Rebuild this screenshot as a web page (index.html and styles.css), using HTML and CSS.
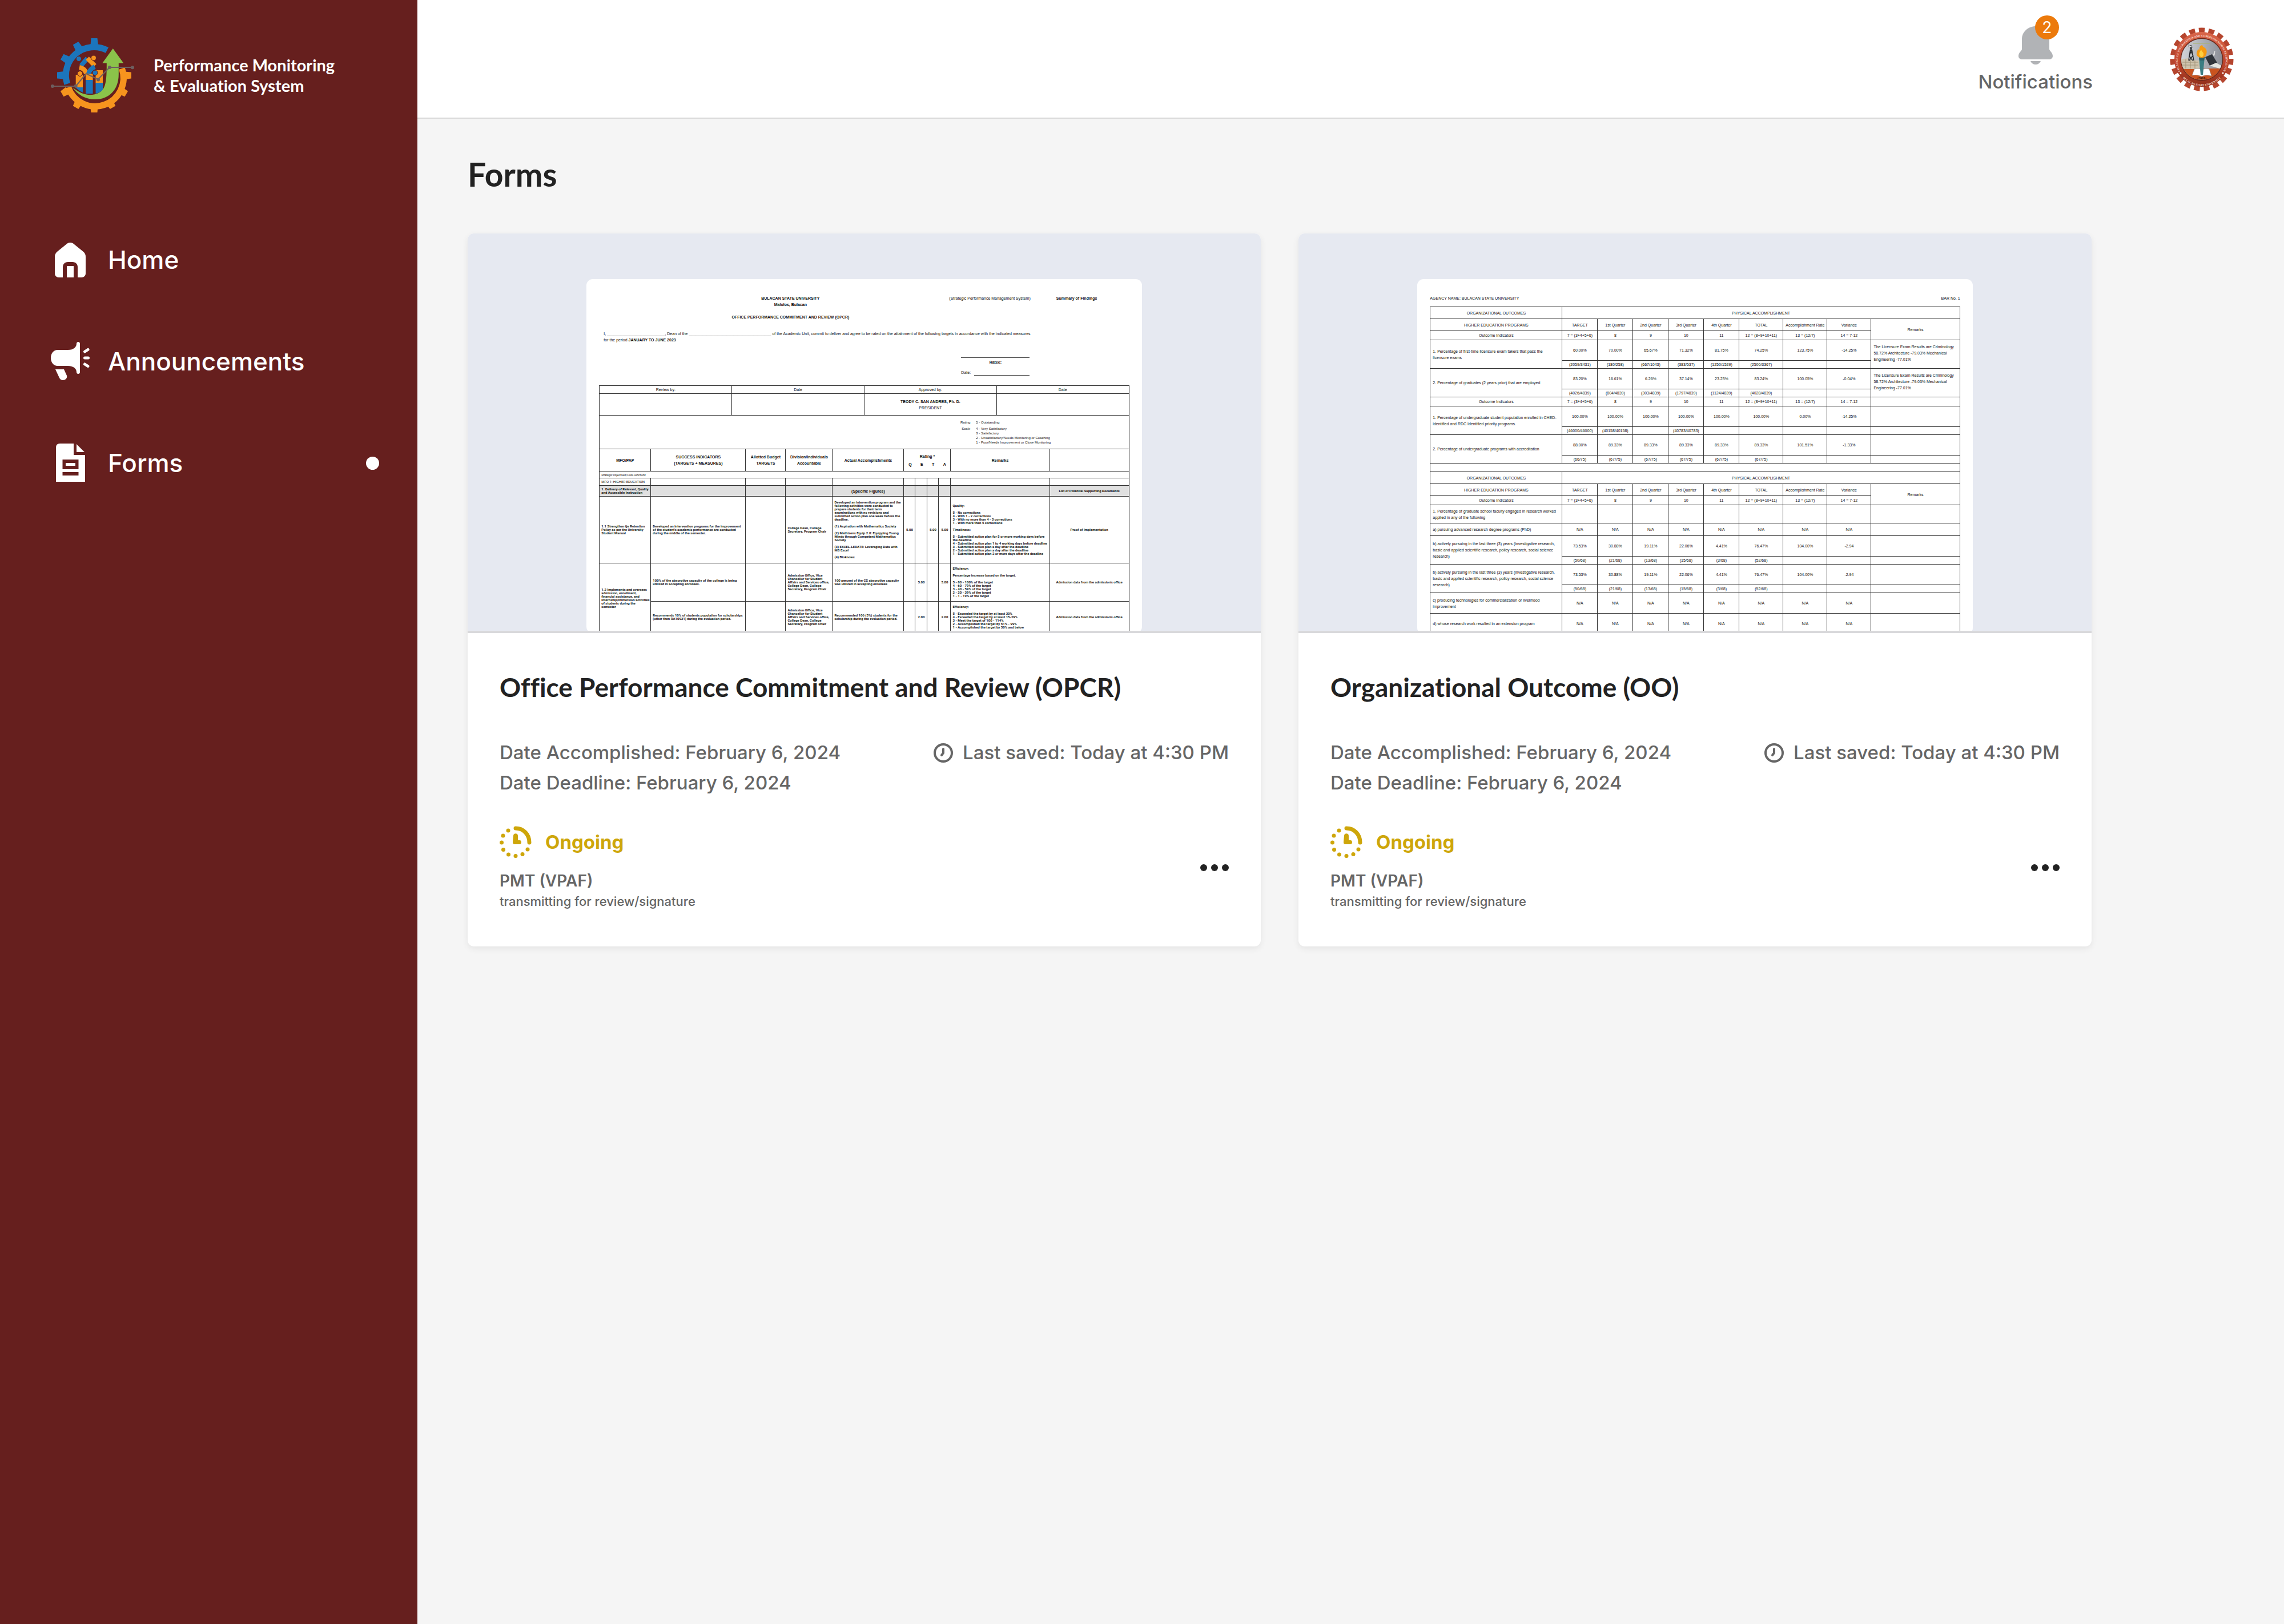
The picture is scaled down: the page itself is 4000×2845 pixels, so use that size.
FILE: index.html
```html
<!DOCTYPE html>
<html lang="en">
<head>
<meta charset="utf-8">
<meta name="viewport" content="width=device-width, initial-scale=1">
<title>Forms - Performance Monitoring &amp; Evaluation System</title>
<link rel="stylesheet" href="styles.css">
</head>
<body>
<svg class="defs" aria-hidden="true">
  <symbol id="i-saved" viewBox="0 0 34 34"><circle cx="17" cy="17" r="15" fill="none" stroke="currentColor" stroke-width="4"/><path d="M17 10v7l-3 4" fill="none" stroke="currentColor" stroke-width="4" stroke-linecap="round" stroke-linejoin="round"/></symbol>
  <symbol id="i-ongoing" viewBox="0 0 56 56"><path d="M28 4c14 0 24 11 24 25" fill="none" stroke="currentColor" stroke-width="7" stroke-linecap="round"/><path d="M24 17c0-5 8-5 8 0v8h3c4 0 4 7 0 7h-8c-3 0-4-1-4-4z" fill="currentColor"/><g fill="currentColor"><circle cx="15" cy="8" r="3.5"/><circle cx="6" cy="17" r="3.5"/><circle cx="3.5" cy="29" r="3.5"/><circle cx="6.500" cy="41.500" r="3.5"/><circle cx="15.500" cy="50" r="3.5"/><circle cx="28" cy="52.500" r="3.5"/><circle cx="40" cy="49.500" r="3.5"/><circle cx="49" cy="41" r="3.5"/></g></symbol>
  <symbol id="i-more" viewBox="0 0 50 12"><circle cx="6" cy="6" r="6"/><circle cx="25" cy="6" r="6"/><circle cx="44" cy="6" r="6"/></symbol>
</svg>
<div class="app">
  <aside class="sidebar">
    <div class="brand">
      <svg class="brand-logo" viewBox="89 67 147 130" role="img" aria-label="PMES logo">
        <g fill="#1c75bc">
          <path id="tooth" d="M158.500 79l1-12h11l1.500 12z"/>
          <use href="#tooth" transform="rotate(-30 165 132)"/>
          <use href="#tooth" transform="rotate(-60 165 132)"/>
          <use href="#tooth" transform="rotate(-90 165 132)"/>
        </g>
        <path d="M187.500 87.900A49.500 49.500 0 0 0 117.700 147" fill="none" stroke="#1c75bc" stroke-width="11"/>
        <g fill="#f7941e">
          <use href="#toothO" transform="rotate(90 165 132)"/>
          <use href="#toothO" transform="rotate(120 165 132)"/>
          <use href="#toothO" transform="rotate(150 165 132)"/>
          <use href="#toothO" transform="rotate(180 165 132)"/>
          <use href="#toothO" transform="rotate(210 165 132)"/>
          <use href="#toothO" transform="rotate(240 165 132)"/>
        </g>
        <defs><path id="toothO" d="M158.500 79l1-12h11l1.500 12z"/></defs>
        <path d="M213.500 120A49.500 49.500 0 0 1 119.500 153" fill="none" stroke="#f7941e" stroke-width="11"/>
        <path d="M132.700 131h12.300v23h-12.300zM150 129h12.600v12h-12.600zM167.500 123h12.500v23h-12.500z" fill="#f7941e"/>
        <path d="M133 153h12v9q-7-3-12-8zM150 140h12.600v24h-12.600zM167.500 145h12.500v12q-5 6-12.500 7z" fill="#1c75bc"/>
        <g fill="none" stroke-width="8">
          <path d="M153 102l-11 13" stroke="#1c75bc"/><path d="M153 102l13 13" stroke="#f7941e"/>
          <path d="M139 118q10 2 12 11" stroke="#f7941e"/><path d="M166 117q-9 4-11 12" stroke="#1c75bc"/>
        </g>
        <g stroke="#661f1e" stroke-width="1"><circle cx="138" cy="103" r="4.500" fill="#1c75bc"/><circle cx="164" cy="101.500" r="4.500" fill="#f7941e"/><circle cx="140" cy="129" r="4.500" fill="#f7941e"/><circle cx="166.500" cy="127.500" r="4.500" fill="#1c75bc"/></g>
        <path d="M197.800 85l18.500 25.500h-8.500v20c0 26-16 44-42 43.500c-16 0-30-8-38.500-21c10 9 22 14 34 13c14-1 20-9 22.500-17c3-10 3-24 3-38.500h-7.500z" fill="#8bc34a"/>
        <g fill="#6d5f60" stroke="none"><circle cx="91.800" cy="151" r="3"/><circle cx="132.700" cy="150.700" r="3"/><circle cx="172" cy="139.500" r="3"/><circle cx="192" cy="118" r="3"/><circle cx="232" cy="118.300" r="3"/></g>
        <path d="M91.800 151h41l18-22l21 10l20-21h40" fill="none" stroke="#6d5f60" stroke-width="2"/>
      </svg>
      <p class="brand-name">Performance Monitoring<br>&amp; Evaluation System</p>
    </div>
    <nav class="nav" aria-label="Main">
      <a class="nav-item" href="#home">
        <svg class="nav-icon" viewBox="-7 -4 68 68" aria-hidden="true"><path d="M27 0c3 0 5 1 7 3L50 16c3 3 4 5 4 9v29c0 4-3 7-7 7h-7V43c0-5-3-9-9-9h-8c-6 0-9 4-9 9v18H7c-4 0-7-3-7-7V25c0-4 1-6 4-9L20 3c2-2 4-3 7-3zM21 41h12v20H21z"/></svg>
        <span>Home</span>
      </a>
      <a class="nav-item" href="#announcements">
        <svg class="nav-icon" viewBox="0 0 68 68" aria-hidden="true"><path d="M0 28c0-8 5-14 12-14h18c10 0 15-5 15-11c0-4 6-4 6 0v50c0 4-6 4-6 0c0-6-5-11-15-11H12C5 42 0 36 0 28zM8 48h15l5 11c2 8-10 11-13 4z"/><path d="M59.500 17l5.500-3.500M59.500 28h6M59.500 39l5.500 3.500" fill="none" stroke="#fff" stroke-width="5" stroke-linecap="round"/></svg>
        <span>Announcements</span>
      </a>
      <a class="nav-item" href="#forms" aria-current="page">
        <svg class="nav-icon" viewBox="-9 0 68 68" aria-hidden="true"><path fill-rule="evenodd" d="M7 0h24v20h20v47H0V7q0-7 7-7zM11.500 28v17h28V28zM11.500 50v6h28v-6z"/><path d="M36 1l14 14H36zM17 34h17v5H17z"/></svg>
        <span>Forms</span>
      </a>
    </nav>
  </aside>

  <div class="page">
    <header class="topbar">
      <button class="notif" type="button">
        <span class="notif-bell">
          <svg viewBox="0 0 60 67" aria-hidden="true"><path d="M30 0c13 0 24 10 24 22v18c0 3 6 6 6 12c0 4-3 6-7 6H7c-4 0-7-2-7-6c0-6 6-9 6-12V22C6 10 17 0 30 0zM21 61h18c-2 4-5 6-9 6s-7-2-9-6z"/></svg>
          <span class="badge">2</span>
        </span>
        <span>Notifications</span>
      </button>
      <a class="avatar" href="#profile" aria-label="Profile">
        <svg viewBox="-56 -56 112 112" aria-hidden="true">
          <defs>
            <linearGradient id="ring" x1="0" y1="0" x2="0" y2="1"><stop offset="0" stop-color="#d9664a"/><stop offset=".55" stop-color="#c0452b"/><stop offset="1" stop-color="#8f2f1b"/></linearGradient>
            <linearGradient id="sky" x1="0" y1="0" x2="1" y2="0"><stop offset="0" stop-color="#d3d6da"/><stop offset="1" stop-color="#8a8d95"/></linearGradient>
            <clipPath id="disc"><circle r="36"/></clipPath>
            <path id="arcTop" d="M-36 24A42 42 0 1 1 36 24"/>
            <path id="arcBottom" d="M-36 30A47 47 0 0 0 36 30"/>
          </defs>
          <circle r="50.500" fill="none" stroke="#b5452e" stroke-width="10" pathLength="19" stroke-dasharray=".6 .4" transform="rotate(-95.700)"/>
          <circle r="48" fill="url(#ring)"/>
          <circle r="37.500" fill="#6b2a1c"/>
          <g clip-path="url(#disc)">
            <path d="M-38-38h76v76h-76z" fill="url(#sky)"/>
            <path d="M-38 16h76v24h-76z" fill="#c9531f"/>
            <path d="M-36 0l12-2 2 3 18 1v15h-32z" fill="#cfc4ae"/>
            <path d="M-34 5h28M-34 10h28M-28 0v16M-20 1v15M-12 2v14" stroke="#a09276" fill="none"/>
            <path d="M-23 2l4-27 5 27M-22-6l6 8M-16-6l-6 8M-20-16l5 10M-18-16l-4 10" stroke="#23262b" stroke-width="1.500" fill="none"/>
            <path d="M-24-26l9 5-8-1z" fill="#eee" stroke="#555" stroke-width=".5"/>
            <path d="M6-4l12-5 9 15-13 5z" fill="#30343a"/><path d="M14 11l11-5 11 6-5 4z" fill="#e6e6e2"/>
            <path d="M20-7l3-8-1 8z" fill="#ddd" stroke="#ddd"/>
            <path d="M-13 17Q-5 15 0 18Q6 15 13 17L17 29Q7 26 0 30Q-8 26-17 28z" fill="#fff" stroke="#888" stroke-width=".6"/>
            <path d="M-5-4H5L2 27H-2z" fill="#3b7d82"/><path d="M-5-4H5L4 2H-4z" fill="#2c5f66"/>
            <path d="M-3-3C-12-6-9-14-6-18c1 2 2 2 2-1c0-4 3-6 5-6c0 4 6 4 7 8c2 6-1 12-5 14z" fill="#f79a10"/>
            <path d="M-1-4c-6-4-3-9 0-13c1 4 5 5 4 9c0 2-2 4-4 4z" fill="#ffd040"/>
            <path d="M-15-28h30" stroke="#a9b36b" stroke-width="1.200"/>
          </g>
          <text class="seal-year" x="0" y="35" text-anchor="middle">•2001•</text>
          <text class="seal-text"><textPath href="#arcTop" startOffset="50%" text-anchor="middle">COLLEGE OF INFORMATION AND COMMUNICATIONS TECHNOLOGY</textPath></text>
          <text class="seal-text"><textPath href="#arcBottom" startOffset="50%" text-anchor="middle">BULACAN STATE UNIVERSITY</textPath></text>
          <circle cx="-37" cy="24" r="1.500" fill="#fff"/><circle cx="37" cy="24" r="1.500" fill="#fff"/>
        </svg>
      </a>
    </header>

    <main class="content">
      <h1>Forms</h1>
      <div class="cards">
        <article class="card">
          <div class="preview">
            <div class="doc">
              <div class="opcr-head">
                <p class="opcr-title"><b>BULACAN STATE UNIVERSITY<br>Malolos, Bulacan<br><br>OFFICE PERFORMANCE COMMITMENT AND REVIEW (OPCR)</b></p>
                <p class="opcr-system">(Strategic Performance Management System)</p>
                <p><b>Summary of Findings</b></p>
              </div>
              <p class="opcr-pledge">I, __________________________, Dean of the _____________________________________ of the Academic Unit, commit to deliver and agree to be rated on the attainment of the following targets in accordance with the indicated measures<br>for the period <b>JANUARY TO JUNE 2023</b></p>
              <div class="ratee">
                <p class="ratee-name"><b>Ratee:</b></p>
                <p class="ratee-date"><span>Date:</span><span class="blank"></span></p>
              </div>
              <table class="sheet approvals">
                <tr class="h14"><td>Review by:</td><td>Date</td><td>Approved by:</td><td>Date</td></tr>
                <tr class="h38"><td></td><td></td><td><b>TEODY C. SAN ANDRES, Ph. D.</b><br>PRESIDENT</td><td></td></tr>
                <tr class="h59"><td colspan="4"><div class="scale"><span>Rating</span><span>5 - Outstanding</span><span>Scale</span><span>4 - Very Satisfactory<br>3 - Satisfactory<br>2 - Unsatisfactory/Needs Monitoring or Coaching<br>1 - Poor/Needs Improvement or Close Monitoring</span></div></td></tr>
              </table>
              <table class="sheet targets">
                <colgroup><col class="w90"><col class="w166"><col class="w70"><col class="w82"><col class="w125"><col class="w20"><col class="w21"><col class="w20"><col class="w21"><col class="w173"><col class="w139"></colgroup>
                <tr class="h39 thead"><th>MFO/PAP</th><th>SUCCESS INDICATORS<br>(TARGETS + MEASURES)</th><th>Allotted Budget<br>TARGETS</th><th>Division/Individuals<br>Accountable</th><th>Actual Accomplishments</th><th colspan="4">Rating *<div class="qeta"><span>Q</span><span>E</span><span>T</span><span>A</span></div></th><th>Remarks</th><th></th></tr>
                <tr class="h12 plain"><td colspan="11"><i>Strategic Objectives/Core Functions</i></td></tr>
                <tr class="h13 plain"><td>MFO 1: HIGHER EDUCATION</td><td></td><td></td><td></td><td></td><td></td><td></td><td></td><td></td><td></td><td></td></tr>
                <tr class="h19 shaded"><td>1. Delivery of Relevant, Quality<br>and Accessible Instruction</td><td></td><td></td><td></td><td class="mid figures">(Specific Figures)</td><td></td><td></td><td></td><td></td><td></td><td class="mid">List of Potential Supporting Documents</td></tr>
                <tr class="h117"><td>1.1 Strengthen tje Retention<br>Policy as per the University<br>Student Manual</td><td>Developed an intervention programs for the improvement<br>of the student's academic performance are conducted<br>during the middle of the semester.</td><td></td><td>College Dean, College<br>Secretary, Program Chair</td><td>Developed an intervention program and the<br>following activities were conducted to<br>prepare students for their term<br>examinations with no revisions and<br>submitted action plan one week before the<br>deadline.<br><br>(1) Aspiration with Mathematics Society<br><br>(2) Mathizens Equip 2.0: Equipping Young<br>Minds through Competent Mathematics<br>Society<br><br>(3) EXCEL-LERATE: Leveraging Data with<br>MS Excel<br><br>(4) Bioknows</td><td class="mid">5.00</td><td></td><td class="mid">5.00</td><td class="mid">5.00</td><td>Quality:<br><br>5 - No corrections<br>4 - With 1 - 2 corrections<br>3 - With no more than 4 - 5 corrections<br>1 - With more than 5 corrections<br><br>Timeliness:<br><br>5 - Submitted action plan for 5 or more working days before<br>the deadline<br>4 - Submitted action plan 1 to 4 working days before deadline<br>3 - Submitted action plan a day after the deadline<br>2 - Submitted action plan a day after the deadline<br>1 - Submitted action plan 2 or more days after the deadline</td><td class="mid">Proof of Implementation</td></tr>
                <tr class="h67"><td rowspan="2">1.2 Implements and oversees<br>admission, enrollment,<br>financial assistance, and<br>internship/immersion activities<br>of students during the<br>semester</td><td>100% of the absorptive capacity of the college is being<br>utilized in accepting enrollees.</td><td></td><td>Admission Office, Vice<br>Chancellor for Student<br>Affairs and Services office,<br>College Dean, College<br>Secretary, Program Chair</td><td>100 percent of the CS absorptive capacity<br>was utilized in accepting enrollees</td><td></td><td class="mid">5.00</td><td></td><td class="mid">5.00</td><td>Efficiency:<br><br>Percentage increase based on the target.<br><br>5 - 80 - 100% of the target<br>4 - 60 - 79% of the target<br>3 - 40 - 59% of the target<br>2 - 20 - 39% of the target<br>1 - 1 - 19% of the target</td><td class="mid">Admission data from the admission's office</td></tr>
                <tr class="h55"><td>Recommends 10% of students population for scholarships<br>(other then RA10931) during the evaluation period.</td><td></td><td>Admission Office, Vice<br>Chancellor for Student<br>Affairs and Services office,<br>College Dean, College<br>Secretary, Program Chair</td><td>Recommended 106 (5%) students for the<br>scholarship during the evaluation period.</td><td></td><td class="mid">2.00</td><td></td><td class="mid">2.00</td><td>Efficiency:<br><br>5 - Exceeded the target by at least 30%<br>4 - Exceeded the target by at least 15-29%<br>3 - Meet the target of 100 - 114%<br>2 - Accomplished the target by 51% - 99%<br>1 - Accomplished the target by 50% and below</td><td class="mid">Admission data from the admission's office</td></tr>
              </table>
            </div>
          </div>
          <div class="card-body">
            <h2>Office Performance Commitment and Review (OPCR)</h2>
            <div class="dates">
              <p>Date Accomplished: February 6, 2024<br>Date Deadline: February 6, 2024</p>
              <p class="saved"><svg class="saved-icon" aria-hidden="true"><use href="#i-saved"/></svg>Last saved: Today at 4:30 PM</p>
            </div>
            <div class="card-foot">
              <div>
                <p class="status"><svg class="status-icon" aria-hidden="true"><use href="#i-ongoing"/></svg>Ongoing</p>
                <p class="office">PMT (VPAF)</p>
                <p class="step">transmitting for review/signature</p>
              </div>
              <button class="more" type="button" aria-label="More options"><svg aria-hidden="true"><use href="#i-more"/></svg></button>
            </div>
          </div>
        </article>

        <article class="card">
          <div class="preview">
            <div class="doc">
              <div class="oo-head"><p>AGENCY NAME: BULACAN STATE UNIVERSITY</p><p>BAR No. 1</p></div>
              <table class="sheet outcomes">
                <colgroup><col class="w231"><col class="w62"><col class="w62"><col class="w62"><col class="w62"><col class="w62"><col class="w77"><col class="w77"><col class="w77"><col class="w155"></colgroup>
                <tr class="h21"><th>ORGANIZATIONAL OUTCOMES</th><th colspan="9">PHYSICAL ACCOMPLISHMENT</th></tr>
                <tr class="h21"><th>HIGHER EDUCATION PROGRAMS</th><th>TARGET</th><th>1st Quarter</th><th>2nd Quarter</th><th>3rd Quarter</th><th>4th Quarter</th><th>TOTAL</th><th>Accomplishment Rate</th><th>Variance</th><th rowspan="2">Remarks</th></tr>
                <tr class="h16"><td>Outcome Indicators</td><td>7 = (3+4+5+6)</td><td>8</td><td>9</td><td>10</td><td>11</td><td>12 = (8+9+10+11)</td><td>13 = (12/7)</td><td>14 = 7-12</td></tr>
                <tr class="h36"><td class="label" rowspan="2">1. Percentage of first-time licensure exam takers that pass the<br>licensure exams</td><td>60.00%</td><td>70.00%</td><td>65.67%</td><td>71.32%</td><td>81.75%</td><td>74.25%</td><td>123.75%</td><td>-14.25%</td><td class="label note" rowspan="2">The Licensure Exam Results are Criminology<br>58.72% Architecture -79.03% Mechanical<br>Engineering -77.01%</td></tr>
                <tr class="h14"><td>(2059/3431)</td><td>(180/258)</td><td>(667/1043)</td><td>(383/537)</td><td>(1250/1529)</td><td>(2500/3367)</td><td></td><td></td></tr>
                <tr class="h36"><td class="label" rowspan="2">2. Percentage of graduates (2 years prior) that are employed</td><td>83.20%</td><td>16.61%</td><td>6.26%</td><td>37.14%</td><td>23.23%</td><td>83.24%</td><td>100.05%</td><td>-0.04%</td><td class="label note" rowspan="2">The Licensure Exam Results are Criminology<br>58.72% Architecture -79.03% Mechanical<br>Engineering -77.01%</td></tr>
                <tr class="h14"><td>(4026/4839)</td><td>(804/4839)</td><td>(303/4839)</td><td>(1797/4839)</td><td>(1124/4839)</td><td>(4028/4839)</td><td></td><td></td></tr>
                <tr class="h16"><td>Outcome Indicators</td><td>7 = (3+4+5+6)</td><td>8</td><td>9</td><td>10</td><td>11</td><td>12 = (8+9+10+11)</td><td>13 = (12/7)</td><td>14 = 7-12</td><td></td></tr>
                <tr class="h36"><td class="label" rowspan="2">1. Percentage of undergraduate student population enrolled in CHED-<br>identified and RDC Identified priority programs.</td><td>100.00%</td><td>100.00%</td><td>100.00%</td><td>100.00%</td><td>100.00%</td><td>100.00%</td><td>0.00%</td><td>-14.25%</td><td></td></tr>
                <tr class="h14"><td>(46000/46000)</td><td>(40158/40158)</td><td></td><td>(40783/40783)</td><td></td><td></td><td></td><td></td><td></td></tr>
                <tr class="h36"><td class="label" rowspan="2">2. Percentage of undergraduate programs with accreditation</td><td>88.00%</td><td>89.33%</td><td>89.33%</td><td>89.33%</td><td>89.33%</td><td>89.33%</td><td>101.51%</td><td>-1.33%</td><td></td></tr>
                <tr class="h14"><td>(66/75)</td><td>(67/75)</td><td>(67/75)</td><td>(67/75)</td><td>(67/75)</td><td>(67/75)</td><td></td><td></td><td></td></tr>
                <tr class="h15"><td colspan="10"></td></tr>
                <tr class="h21"><th>ORGANIZATIONAL OUTCOMES</th><th colspan="9">PHYSICAL ACCOMPLISHMENT</th></tr>
                <tr class="h21"><th>HIGHER EDUCATION PROGRAMS</th><th>TARGET</th><th>1st Quarter</th><th>2nd Quarter</th><th>3rd Quarter</th><th>4th Quarter</th><th>TOTAL</th><th>Accomplishment Rate</th><th>Variance</th><th rowspan="2">Remarks</th></tr>
                <tr class="h16"><td>Outcome Indicators</td><td>7 = (3+4+5+6)</td><td>8</td><td>9</td><td>10</td><td>11</td><td>12 = (8+9+10+11)</td><td>13 = (12/7)</td><td>14 = 7-12</td></tr>
                <tr class="h32"><td class="label">1. Percentage of graduate school faculty engaged in research worked<br>applied in any of the following</td><td></td><td></td><td></td><td></td><td></td><td></td><td></td><td></td><td></td></tr>
                <tr class="h22"><td class="label">a) pursuing advanced research degree programs (PhD)</td><td>N/A</td><td>N/A</td><td>N/A</td><td>N/A</td><td>N/A</td><td>N/A</td><td>N/A</td><td>N/A</td><td></td></tr>
                <tr class="h36"><td class="label" rowspan="2">b) actively pursuing in the last three (3) years (investigative research,<br>basic and applied scientific research, policy research, social science<br>research)</td><td>73.53%</td><td>30.88%</td><td>19.11%</td><td>22.06%</td><td>4.41%</td><td>76.47%</td><td>104.00%</td><td>-2.94</td><td></td></tr>
                <tr class="h14"><td>(50/68)</td><td>(21/68)</td><td>(13/68)</td><td>(15/68)</td><td>(3/68)</td><td>(52/68)</td><td></td><td></td><td></td></tr>
                <tr class="h36"><td class="label" rowspan="2">b) actively pursuing in the last three (3) years (investigative research,<br>basic and applied scientific research, policy research, social science<br>research)</td><td>73.53%</td><td>30.88%</td><td>19.11%</td><td>22.06%</td><td>4.41%</td><td>76.47%</td><td>104.00%</td><td>-2.94</td><td></td></tr>
                <tr class="h14"><td>(50/68)</td><td>(21/68)</td><td>(13/68)</td><td>(15/68)</td><td>(3/68)</td><td>(52/68)</td><td></td><td></td><td></td></tr>
                <tr class="h36"><td class="label">c) producing technologies for commercialization or livelihood<br>improvement</td><td>N/A</td><td>N/A</td><td>N/A</td><td>N/A</td><td>N/A</td><td>N/A</td><td>N/A</td><td>N/A</td><td></td></tr>
                <tr class="h36"><td class="label">d) whose research work resulted in an extension program</td><td>N/A</td><td>N/A</td><td>N/A</td><td>N/A</td><td>N/A</td><td>N/A</td><td>N/A</td><td>N/A</td><td></td></tr>
              </table>
            </div>
          </div>
          <div class="card-body">
            <h2>Organizational Outcome (OO)</h2>
            <div class="dates">
              <p>Date Accomplished: February 6, 2024<br>Date Deadline: February 6, 2024</p>
              <p class="saved"><svg class="saved-icon" aria-hidden="true"><use href="#i-saved"/></svg>Last saved: Today at 4:30 PM</p>
            </div>
            <div class="card-foot">
              <div>
                <p class="status"><svg class="status-icon" aria-hidden="true"><use href="#i-ongoing"/></svg>Ongoing</p>
                <p class="office">PMT (VPAF)</p>
                <p class="step">transmitting for review/signature</p>
              </div>
              <button class="more" type="button" aria-label="More options"><svg aria-hidden="true"><use href="#i-more"/></svg></button>
            </div>
          </div>
        </article>
      </div>
    </main>
  </div>
</div>
</body>
</html>
```
FILE: styles.css
```css
* { box-sizing: border-box; margin: 0; padding: 0; }

body {
  background: #f5f5f5;
  color: #666;
  font-family: Inter, "Liberation Sans", sans-serif;
  font-size: 33px;
  font-weight: 500;
}

button { background: none; border: 0; color: inherit; font: inherit; cursor: pointer; }
a { color: inherit; text-decoration: none; }
svg { display: block; }
.defs { display: none; }

.app { display: grid; grid-template-columns: 731px 1fr; min-height: 100vh; }

/* Sidebar */
.sidebar { background: #661f1e; color: #fff; padding: 67px 67px 67px 89px; }
.brand { display: flex; align-items: center; gap: 33px; }
.brand-logo { flex: none; width: 147px; height: 130px; }
.brand-name {
  font-family: Lato, "Liberation Sans", sans-serif;
  font-size: 29px;
  font-weight: 700;
  font-variant-ligatures: none;
  line-height: 36px;
  white-space: nowrap;
}
.nav { display: flex; flex-direction: column; gap: 110px; margin-top: 224px; }
.nav-item { display: flex; align-items: center; gap: 32px; height: 68px; font-size: 44px; }
.nav-icon { flex: none; width: 68px; height: 68px; fill: #fff; }
.nav-item[aria-current]::after {
  content: "";
  width: 23px;
  height: 23px;
  margin-left: auto;
  border-radius: 50%;
  background: #fff;
}

/* Top bar */
.topbar {
  display: flex;
  align-items: center;
  justify-content: flex-end;
  gap: 135px;
  height: 208px;
  padding: 2px 88px 0 0;
  background: #fff;
  border-bottom: 2px solid #d9d9d9;
}
.notif { display: flex; flex-direction: column; align-items: center; gap: 10px; line-height: 40px; }
.notif-bell { position: relative; width: 60px; height: 67px; fill: #b1b3b6; }
.badge {
  position: absolute;
  top: -19px;
  left: 29px;
  width: 42px;
  height: 42px;
  border-radius: 50%;
  background: #ec7a0c;
  color: #fff;
  font-size: 28px;
  font-weight: 400;
  line-height: 42px;
  text-align: center;
}
.avatar { width: 112px; height: 112px; }
.seal-text { fill: #f8ddd4; font: 700 5px "Liberation Serif", serif; }
.seal-year { fill: #2b1208; font: 700 6px "Liberation Serif", serif; }

/* Content */
.content { padding: 65px 337px 64px 88px; }
h1, h2 { color: #222; font-family: Lato, "Liberation Sans", sans-serif; font-variant-ligatures: none; }
h1 { font-size: 57px; font-weight: 700; line-height: 64px; }
.cards { display: grid; grid-template-columns: 1fr 1fr; gap: 66px; margin-top: 72px; }
.card { overflow: hidden; border-radius: 11px; background: #fff; box-shadow: 0 4px 12px rgba(0, 0, 0, .07); }
.preview {
  height: 700px;
  overflow: hidden;
  padding-top: 80px;
  background: #e6e9f1;
  border-bottom: 4px solid #d9d9db;
}
.card-body { padding: 67px 56px 65px; }
h2 { font-size: 46px; font-weight: 700; line-height: 56px; }
.dates { display: flex; justify-content: space-between; margin-top: 60px; line-height: 53px; }
.saved { display: flex; align-items: center; align-self: flex-start; gap: 17px; }
.saved-icon { width: 34px; height: 34px; }
.card-foot { display: flex; align-items: center; justify-content: space-between; margin-top: 49px; }
.status { display: flex; align-items: center; gap: 24px; color: #cea60a; font-weight: 700; }
.status-icon { width: 56px; height: 56px; }
.office { margin-top: 22px; font-size: 28px; font-weight: 600; line-height: 36px; }
.step { margin-top: 4px; font-size: 22px; line-height: 28px; }
.more svg { width: 50px; height: 12px; fill: #222; }

/* Document previews */
.doc {
  width: 70%;
  margin: 0 auto;
  padding: 28px 22px 0;
  border-radius: 11px;
  background: #fff;
  color: #111;
  font: 7px/11px "Liberation Sans", sans-serif;
  white-space: nowrap;
}
.sheet { width: 100%; border-collapse: collapse; table-layout: fixed; text-align: center; }
.sheet td, .sheet th { border: 1px solid #333; vertical-align: middle; }
.outcomes th { font-weight: 400; }

.opcr-head { display: flex; }
.opcr-title { width: 226px; margin-left: 222px; text-align: center; }
.opcr-system { margin: 0 45px 0 165px; }
.opcr-pledge { margin-top: 18px; padding-left: 8px; }
.ratee { width: 120px; margin: 25px 0 17px 634px; border-top: 1px solid #444; padding-top: 2px; }
.ratee-name { text-align: center; }
.ratee-date { display: flex; gap: 6px; margin-top: 7px; }
.blank { flex: 1; border-bottom: 1px solid #444; }
.scale {
  display: grid;
  grid-template-columns: 18px auto;
  gap: 3px 10px;
  padding-left: 631px;
  font-size: 6px;
  line-height: 8px;
  text-align: left;
}
.scale span:nth-child(odd) { text-align: right; }

.targets { margin-top: -1px; font: 700 6px/6px Roboto, "Liberation Sans", sans-serif; text-align: left; }
.targets td { padding: 0 3px; }
.targets .thead { font: 700 7px/11px "Liberation Sans", sans-serif; text-align: center; }
.targets .plain { font-weight: 400; }
.targets i { font-size: 5px; }
.targets .mid { padding: 0; text-align: center; }
.targets .figures { font: 700 7px "Liberation Sans", sans-serif; }
.shaded { background: #e0e0e0; }
.qeta { display: flex; justify-content: space-around; margin-top: 3px; }

.oo-head { display: flex; justify-content: space-between; margin-bottom: 9px; }
.outcomes .label { padding-left: 4px; text-align: left; }
.outcomes .note { padding-bottom: 5px; }

.h12 { height: 12px; }
.h13 { height: 13px; }
.h14 { height: 14px; }
.h15 { height: 15px; }
.h16 { height: 16px; }
.h19 { height: 19px; }
.h21 { height: 21px; }
.h22 { height: 22px; }
.h32 { height: 32px; }
.h36 { height: 36px; }
.h38 { height: 38px; }
.h39 { height: 39px; }
.h55 { height: 55px; }
.h59 { height: 59px; }
.h67 { height: 67px; }
.h117 { height: 117px; }

.w20 { width: 20px; }
.w21 { width: 21px; }
.w62 { width: 62px; }
.w70 { width: 70px; }
.w77 { width: 77px; }
.w82 { width: 82px; }
.w90 { width: 90px; }
.w125 { width: 125px; }
.w139 { width: 139px; }
.w155 { width: 155px; }
.w166 { width: 166px; }
.w173 { width: 173px; }
.w231 { width: 231px; }
```
